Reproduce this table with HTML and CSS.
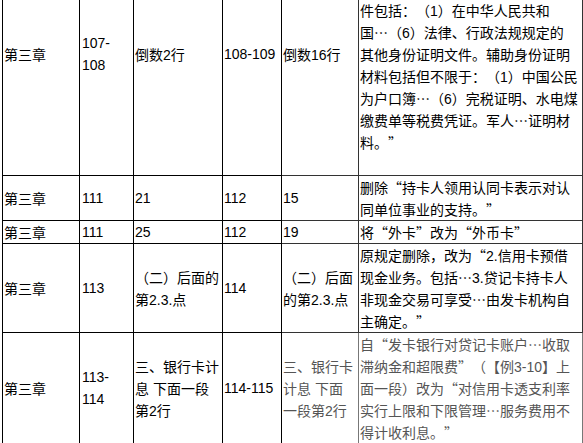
FILE: index.html
```html
<!DOCTYPE html>
<html lang="zh-CN">
<head>
<meta charset="utf-8">
<title>教材勘误表</title>
<link rel="stylesheet" href="styles.css">
</head>
<body>
<table class="errata">
  <colgroup>
    <col class="c1"><col class="c2"><col class="c3"><col class="c4"><col class="c5"><col class="c6">
  </colgroup>
  <tbody>
    <tr>
      <td>第三章</td>
      <td class="n pg">107-108</td>
      <td>倒数<span class="n">2</span>行</td>
      <td class="n">108-109</td>
      <td class="r mid">倒数<span class="n">16</span>行</td>
      <td class="r wide">原规定删除，改为“个人申请银行<br>卡应当提供有效身份证件和辅助身<br>份证明材料。个人客户有效身份证<br>件包括：（<span class="n">1</span>）在中华人民共和<br>国…（<span class="n">6</span>）法律、行政法规规定的<br>其他身份证明文件。辅助身份证明<br>材料包括但不限于：（<span class="n">1</span>）中国公民<br>为户口簿…（<span class="n">6</span>）完税证明、水电煤<br>缴费单等税费凭证。军人…证明材<br>料。”<br>&nbsp;</td>
    </tr>
    <tr>
      <td>第三章</td>
      <td class="n pg">111</td>
      <td class="n">21</td>
      <td class="n">112</td>
      <td class="r mid n">15</td>
      <td class="r wide">删除“持卡人领用认同卡表示对认同单位事业的支持。”</td>
    </tr>
    <tr>
      <td>第三章</td>
      <td class="n pg">111</td>
      <td class="n">25</td>
      <td class="n">112</td>
      <td class="r mid n">19</td>
      <td class="r wide">将“外卡”改为“外币卡”</td>
    </tr>
    <tr>
      <td>第三章</td>
      <td class="n pg">113</td>
      <td>（二）后面的第<span class="n">2.3.</span>点</td>
      <td class="n">114</td>
      <td class="r mid">（二）后面的第<span class="n">2.3.</span>点</td>
      <td class="r wide">原规定删除，改为“<span class="n">2.</span>信用卡预借现金业务。包括…<span class="n">3.</span>贷记卡持卡人非现金交易可享受…由发卡机构自主确定。”</td>
    </tr>
    <tr class="last">
      <td>第三章</td>
      <td class="n pg">113-114</td>
      <td>三、银行卡计息<span class="n"> </span>下面一段第<span class="n">2</span>行</td>
      <td class="n">114-115</td>
      <td class="r mid g">三、银行卡计息<span class="n"> </span>下面一段第<span class="n">2</span>行</td>
      <td class="r wide g">自“发卡银行对贷记卡账户…收取滞纳金和超限费”（【例<span class="n">3-10</span>】上面一段）改为“对信用卡透支利率实行上限和下限管理…服务费用不得计收利息。”</td>
    </tr>
  </tbody>
</table>
</body>
</html>
```

FILE: styles.css
```css
html, body {
  margin: 0;
  padding: 0;
  background: #fff;
}

.errata {
  margin: -68px 0 0 2px;
  border-collapse: collapse;
  table-layout: fixed;
  width: 580px;
  font-family: "Noto Sans CJK SC", "Liberation Sans", sans-serif;
  font-size: 14px;
  line-height: 22px;
  color: #000;
  font-feature-settings: "fwid" 1;
  text-spacing-trim: space-all;
}

.c1 { width: 77px; }
.c2 { width: 54px; }
.c3 { width: 89px; }
.c4 { width: 59px; }
.c5 { width: 77px; }
.c6 { width: 224px; }

.errata td {
  border: 1px solid #000;
  padding: 0 1px;
  vertical-align: middle;
}

.errata td.pg {
  padding: 0 2px;
}

.errata td.mid {
  padding-right: 3px;
}

.errata td.wide {
  padding-right: 4px;
}

.errata td.r {
  border-color: #333;
}

td.n {
  font-family: "Liberation Sans", "Noto Sans CJK SC", sans-serif;
}

span.n {
  font-family: "Liberation Sans", "Noto Sans CJK SC", sans-serif;
  line-height: 14px;
}

.errata .last td.r {
  border-color: #777;
}

.errata .last td.g {
  color: #555;
}
```
